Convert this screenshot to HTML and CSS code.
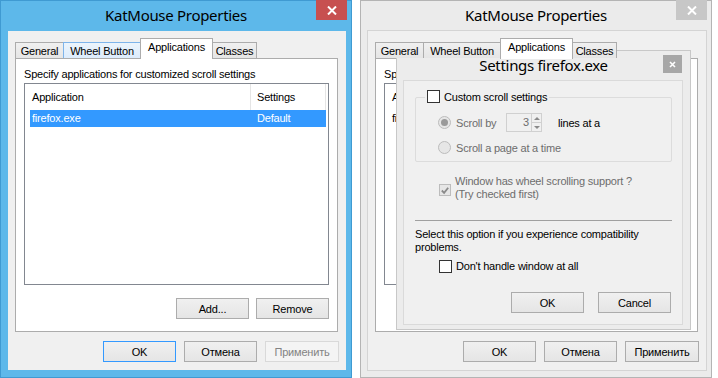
FILE: index.html
```html
<!DOCTYPE html>
<html lang="en">
<head>
    <meta charset="UTF-8">
    <title>KatMouse Properties</title>
    <link rel="stylesheet" href="styles.css">
</head>
<body>
    <div class="desktop">
        <!-- main window, active -->
        <div class="window active">
            <div class="titlebar">
                <h1 class="title">KatMouse Properties</h1>
                <div class="close">
                    <svg width="10" height="9" viewBox="0 0 10 9"><path d="M1 0.5 L9 8.5 M9 0.5 L1 8.5" stroke="#fff" stroke-width="2"/></svg>
                </div>
            </div>
            <div class="client">
                <div class="tabs">
                    <div class="tab t-general">General</div>
                    <div class="tab t-wheel hot">Wheel Button</div>
                    <div class="tab t-apps selected">Applications</div>
                    <div class="tab t-classes">Classes</div>
                </div>
                <div class="panel">
                    <p class="hint">Specify applications for customized scroll settings</p>
                    <div class="listview">
                        <div class="lv-head">
                            <div class="lv-col col-app">Application</div>
                            <div class="lv-col col-set">Settings</div>
                        </div>
                        <div class="lv-row selected">
                            <div class="cell-app">firefox.exe</div>
                            <div class="cell-set">Default</div>
                        </div>
                    </div>
                    <div class="btn-row">
                        <button class="btn">Add...</button>
                        <button class="btn">Remove</button>
                    </div>
                </div>
                <div class="btn-row bottom">
                    <button class="btn default">OK</button>
                    <button class="btn">Отмена</button>
                    <button class="btn wide disabled">Применить</button>
                </div>
            </div>
        </div>

        <!-- same window, behind the settings dialog -->
        <div class="window inactive">
            <div class="titlebar">
                <h1 class="title">KatMouse Properties</h1>
                <div class="close">
                    <svg width="10" height="9" viewBox="0 0 10 9"><path d="M1 0.5 L9 8.5 M9 0.5 L1 8.5" stroke="#fff" stroke-width="2"/></svg>
                </div>
            </div>
            <div class="client">
                <div class="tabs">
                    <div class="tab t-general">General</div>
                    <div class="tab t-wheel">Wheel Button</div>
                    <div class="tab t-apps selected">Applications</div>
                    <div class="tab t-classes">Classes</div>
                </div>
                <div class="panel">
                    <p class="hint">Specify applications for customized scroll settings</p>
                    <div class="listview">
                        <div class="lv-head">
                            <div class="lv-col col-app">Application</div>
                            <div class="lv-col col-set">Settings</div>
                        </div>
                        <div class="lv-row">
                            <div class="cell-app">firefox.exe</div>
                            <div class="cell-set">Default</div>
                        </div>
                    </div>
                    <!-- Add / Remove sit fully under the dialog here -->
                    <div class="btn-row hidden-row"></div>
                </div>
                <div class="btn-row bottom">
                    <button class="btn">OK</button>
                    <button class="btn">Отмена</button>
                    <button class="btn wide">Применить</button>
                </div>
            </div>
        </div>

        <!-- settings dialog -->
        <div class="dialog">
            <div class="dlg-titlebar">
                <h2 class="dlg-title">Settings firefox.exe</h2>
                <div class="dlg-close">
                    <svg width="7" height="7" viewBox="0 0 7 7"><path d="M1 1 L6 6 M6 1 L1 6" stroke="#fff" stroke-width="1.6"/></svg>
                </div>
            </div>
            <div class="dlg-client">
                <div class="group">
                    <div class="legend">
                        <span class="checkbox"></span>
                        <span>Custom scroll settings</span>
                    </div>
                    <div class="opt-row first">
                        <span class="radio on"></span>
                        <span class="gray label-scroll">Scroll by</span>
                        <div class="spin">
                            <span class="spin-val">3</span>
                            <span class="spin-btns">
                                <span class="spin-up"></span>
                                <span class="spin-down"></span>
                            </span>
                        </div>
                        <span class="lines">lines at a</span>
                    </div>
                    <div class="opt-row">
                        <span class="radio"></span>
                        <span class="gray">Scroll a page at a time</span>
                    </div>
                </div>

                <div class="check-row support">
                    <span class="checkbox disabled">
                        <svg width="11" height="11" viewBox="0 0 11 11"><path d="M2 5.5 L4.5 8 L9 2.5" fill="none" stroke="#8a8a8a" stroke-width="2"/></svg>
                    </span>
                    <span class="gray">Window has wheel scrolling support ?<br>(Try checked first)</span>
                </div>

                <div class="separator"></div>

                <p class="compat">Select this option if you experience compatibility<br>problems.</p>

                <div class="check-row handle">
                    <span class="checkbox"></span>
                    <span>Don't handle window at all</span>
                </div>

                <div class="btn-row dlg-buttons">
                    <button class="btn">OK</button>
                    <button class="btn">Cancel</button>
                </div>
            </div>
        </div>
    </div>
</body>
</html>
```

FILE: styles.css
```css
* {
    box-sizing: border-box;
}

body {
    margin: 0;
    width: 718px;
    height: 378px;
    overflow: hidden;
    background: #fff;
    font-family: "Liberation Sans", Arial, sans-serif;
    font-size: 11px;
    letter-spacing: -0.2px;
    color: #000;
}

.desktop {
    position: relative;
    display: flex;
    gap: 8px;
    height: 378px;
}

/* window frame */
.window {
    width: 352px;
    height: 378px;
    display: flex;
    flex-direction: column;
}

.window.active {
    background: #5db8ea;
    box-shadow: inset 0 0 0 1px #3f9ad2;
}

.window.inactive {
    background: #ebebeb;
    box-shadow: inset 0 0 0 1px #b4b4b4;
}

.titlebar {
    height: 31px;
    flex: none;
    display: grid;
    grid-template-columns: 1fr auto 1fr;
    align-items: start;
}

.title {
    grid-column: 2;
    margin: 0;
    font-family: "Noto Sans", sans-serif;
    font-size: 15px;
    font-weight: 400;
    line-height: 31px;
    letter-spacing: -0.3px;
    color: #000;
    white-space: nowrap;
}

.close {
    grid-column: 3;
    justify-self: end;
    margin-right: 5px;
    width: 31px;
    height: 20px;
    background: #c75050;
    display: flex;
    align-items: center;
    justify-content: center;
}

.inactive .close {
    background: #c7c7c7;
}

.client {
    flex: 1;
    margin: 0 6px 8px 8px;
    padding: 7px 8px 0 7px;
    background: #f0f0f0;
    display: flex;
    flex-direction: column;
}

.inactive .client {
    box-shadow: 0 0 0 1px #d4d4d4;
}

/* tabs */
.tabs {
    height: 20px;
    display: flex;
    align-items: flex-end;
    position: relative;
    z-index: 1;
}

.tab {
    height: 16px;
    margin-left: -1px;
    border: 1px solid #acacac;
    border-bottom: none;
    background: linear-gradient(#f0f0f0, #e5e5e5);
    display: flex;
    align-items: center;
    justify-content: center;
    white-space: nowrap;
}

.t-general {
    margin-left: 0;
    width: 49px;
}

.t-wheel {
    width: 78px;
}

.t-apps {
    width: 73px;
}

.t-classes {
    width: 45px;
}

.tab.hot {
    background: linear-gradient(#ecf4fc, #dcecfc);
    border-color: #7eb4ea;
}

.tab.selected {
    height: 21px;
    margin-bottom: -1px;
    background: #fff;
    position: relative;
    z-index: 1;
    padding-bottom: 4px;
}

.panel {
    height: 274px;
    border: 1px solid #acacac;
    background: #fff;
    padding: 0 8px;
    display: flex;
    flex-direction: column;
}

.hint {
    margin: 9px 0 0;
    line-height: 13px;
}

/* list view */
.listview {
    margin-top: 2px;
    height: 202px;
    border: 1px solid #828790;
    background: #fff;
}

.lv-head {
    height: 26px;
    display: flex;
}

.lv-col {
    border-right: 1px solid #e5e5e5;
    line-height: 26px;
}

.col-app {
    width: 226px;
    padding-left: 7px;
}

.col-set {
    width: 75px;
    padding-left: 6px;
}

.lv-row {
    margin-left: 5px;
    width: 296px;
    height: 17px;
    line-height: 17px;
    display: flex;
}

.lv-row.selected {
    background: #3399ff;
    color: #fff;
}

.cell-app {
    width: 220px;
    padding-left: 2px;
}

.cell-set {
    padding-left: 7px;
}

/* buttons */
.btn-row {
    margin-top: 13px;
    display: flex;
    justify-content: flex-end;
    gap: 7px;
}

.hidden-row {
    height: 21px;
}

.btn {
    width: 73px;
    height: 21px;
    padding: 0;
    border: 1px solid #acacac;
    background: linear-gradient(#f0f0f0, #e5e5e5);
    font-family: "Liberation Sans", Arial, sans-serif;
    font-size: 11px;
    letter-spacing: -0.2px;
    color: #000;
}

.btn.wide {
    width: 74px;
}

.btn.default {
    border-color: #3399ff;
}

.btn.disabled {
    border-color: #d9d9d9;
    background: #f4f4f4;
    color: #838383;
}

.btn-row.bottom {
    margin-top: 9px;
    margin-right: -1px;
    gap: 8px;
}

/* settings dialog */
.dialog {
    position: absolute;
    left: 396px;
    top: 50px;
    width: 295px;
    height: 280px;
    background: #ececec;
    border: 1px solid #c8c8c8;
    display: flex;
    flex-direction: column;
}

.dlg-titlebar {
    height: 29px;
    flex: none;
    display: grid;
    grid-template-columns: 1fr auto 1fr;
    align-items: start;
}

.dlg-title {
    grid-column: 2;
    margin: 0;
    font-family: "Noto Sans", sans-serif;
    font-size: 15px;
    font-weight: 400;
    line-height: 29px;
    letter-spacing: -0.3px;
    white-space: nowrap;
}

.dlg-close {
    grid-column: 3;
    justify-self: end;
    margin: 4px 8px 0 0;
    width: 19px;
    height: 18px;
    background: #a7a7a7;
    display: flex;
    align-items: center;
    justify-content: center;
}

.dlg-client {
    flex: 1;
    margin: 0 7px 4px 6px;
    border: 1px solid #dadada;
    background: #f0f0f0;
    padding: 0 10px 0 11px;
    display: flex;
    flex-direction: column;
}

.group {
    margin-top: 16px;
    height: 65px;
    border: 1px solid #dcdcdc;
    border-radius: 2px;
}

.legend {
    margin: -8px 0 0 9px;
    padding: 0 2px;
    width: fit-content;
    height: 13px;
    background: #f0f0f0;
    display: flex;
    align-items: center;
    gap: 4px;
}

.checkbox {
    width: 13px;
    height: 13px;
    flex: none;
    border: 1px solid #333;
    background: #fff;
    display: inline-flex;
}

.checkbox.disabled {
    border-color: #bcbcbc;
    background: #e6e6e6;
}

.opt-row {
    margin: 9px 0 0 22px;
    height: 13px;
    display: flex;
    align-items: center;
}

.opt-row.first {
    margin-top: 10px;
    height: 19px;
}

.radio {
    width: 13px;
    height: 13px;
    flex: none;
    border: 1px solid #bcbcbc;
    border-radius: 50%;
    background: #e6e6e6;
    margin-right: 5px;
    display: flex;
    align-items: center;
    justify-content: center;
}

.radio.on::after {
    content: "";
    width: 7px;
    height: 7px;
    border-radius: 50%;
    background: #9a9a9a;
}

.gray {
    color: #6d6d6d;
}

.label-scroll {
    width: 50px;
}

.spin {
    width: 36px;
    height: 19px;
    border: 1px solid #d0d0d0;
    background: #f0f0f0;
    display: flex;
}

.spin-val {
    flex: 1;
    text-align: right;
    line-height: 17px;
    padding-right: 2px;
    color: #6d6d6d;
}

.spin-btns {
    width: 10px;
    display: flex;
    flex-direction: column;
    border-left: 1px solid #d0d0d0;
}

.spin-up,
.spin-down {
    flex: 1;
    display: flex;
    align-items: center;
    justify-content: center;
}

.spin-up {
    border-bottom: 1px solid #d0d0d0;
}

.spin-up::after {
    content: "";
    border: 3px solid transparent;
    border-bottom: 3px solid #8a8a8a;
    border-top: none;
}

.spin-down::after {
    content: "";
    border: 3px solid transparent;
    border-top: 3px solid #8a8a8a;
    border-bottom: none;
}

.lines {
    margin-left: 16px;
}

.check-row {
    display: flex;
    align-items: center;
    gap: 4px;
    line-height: 13px;
}

.check-row.support {
    margin: 13px 0 0 24px;
}

.check-row.support .checkbox {
    width: 12px;
    height: 12px;
    margin-top: 4px;
    align-items: center;
    justify-content: center;
}

.separator {
    margin-top: 19px;
    height: 1px;
    background: #a0a0a0;
}

.compat {
    margin: 7px 0 0;
    line-height: 13px;
}

.check-row.handle {
    margin: 6px 0 0 24px;
}

.dlg-buttons {
    margin-top: 19px;
    margin-right: 1px;
    gap: 14px;
}
```
